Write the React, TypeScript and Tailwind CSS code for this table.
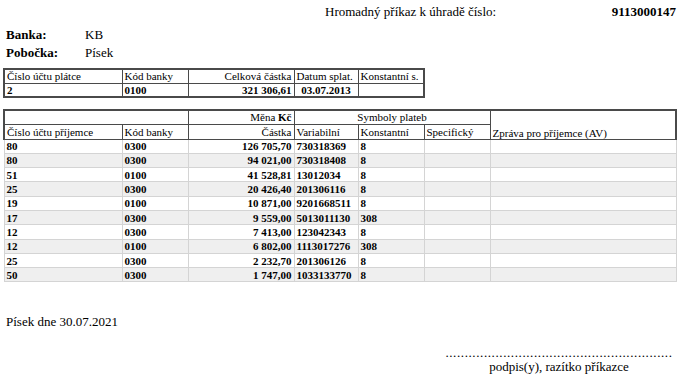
const rows = [
  { ucet: "80", kod: "0300", castka: "126 705,70", vs: "730318369", ks: "8" },
  { ucet: "80", kod: "0300", castka: "94 021,00", vs: "730318408", ks: "8" },
  { ucet: "51", kod: "0100", castka: "41 528,81", vs: "13012034", ks: "8" },
  { ucet: "25", kod: "0300", castka: "20 426,40", vs: "201306116", ks: "8" },
  { ucet: "19", kod: "0100", castka: "10 871,00", vs: "9201668511", ks: "8" },
  { ucet: "17", kod: "0300", castka: "9 559,00", vs: "5013011130", ks: "308" },
  { ucet: "12", kod: "0300", castka: "7 413,00", vs: "123042343", ks: "8" },
  { ucet: "12", kod: "0100", castka: "6 802,00", vs: "1113017276", ks: "308" },
  { ucet: "25", kod: "0300", castka: "2 232,70", vs: "201306126", ks: "8" },
  { ucet: "50", kod: "0300", castka: "1 747,00", vs: "1033133770", ks: "8" },
]

const cell = "py-0 px-[2px] leading-[12px]"
const hd = cell + " border border-[#4a4a4a] font-normal"
const hdb = cell + " border border-[#4a4a4a] font-bold"
const td = cell + " border border-[#d4d4d4] font-bold"

export default function App() {
  return (
    <div className="w-[680px] h-[379px] bg-white text-black [font-family:Liberation_Serif,Times_New_Roman,serif] overflow-hidden">
      {/* Header */}
      <div className="flex justify-between pl-[325px] pr-[4px] pt-[4px] text-[13px] leading-[16px]">
        <span>Hromadný příkaz k úhradě číslo:</span>
        <span className="font-bold">9113000147</span>
      </div>

      <div className="pl-[6px] pt-[6px] text-[13px] leading-[18px]">
        <div className="flex">
          <span className="w-[79px] font-bold">Banka:</span>
          <span>KB</span>
        </div>
        <div className="flex">
          <span className="w-[79px] font-bold">Pobočka:</span>
          <span>Písek</span>
        </div>
      </div>

      {/* Payer table */}
      <table className="ml-[3px] mt-[6px] border-collapse table-fixed text-[11px] border-2 border-[#4a4a4a]">
        <colgroup>
          <col className="w-[118px]" />
          <col className="w-[66px]" />
          <col className="w-[106px]" />
          <col className="w-[64px]" />
          <col className="w-[66px]" />
        </colgroup>
        <tbody>
          <tr className="h-[14px]">
            <td className={hd + " text-left"}>Číslo účtu plátce</td>
            <td className={hd + " text-left"}>Kód banky</td>
            <td className={hd + " text-right"}>Celková částka</td>
            <td className={hd + " text-left"}>Datum splat.</td>
            <td className={hd + " text-left"}>Konstantní s.</td>
          </tr>
          <tr className="h-[14px]">
            <td className={hdb}>2</td>
            <td className={hdb}>0100</td>
            <td className={hdb + " text-right"}>321 306,61</td>
            <td className={hdb + " text-center"}>03.07.2013</td>
            <td className={hdb}></td>
          </tr>
        </tbody>
      </table>

      {/* Payments table */}
      <table className="ml-[3px] mt-[11px] border-collapse table-fixed text-[11px]">
        <colgroup>
          <col className="w-[118px]" />
          <col className="w-[66px]" />
          <col className="w-[106px]" />
          <col className="w-[64px]" />
          <col className="w-[66px]" />
          <col className="w-[66px]" />
          <col className="w-[186px]" />
        </colgroup>
        <thead>
          <tr className="h-[14px]">
            <th colSpan={2} className={hd + " border-t-2 border-l-2"}></th>
            <th className={hd + " border-t-2 text-right"}>
              Měna <span className="font-bold">Kč</span>
            </th>
            <th colSpan={3} className={hd + " border-t-2 text-center"}>Symboly plateb</th>
            <th rowSpan={2} className={hd + " border-t-2 border-r-2 text-left align-bottom"}>
              Zpráva pro příjemce (AV)
            </th>
          </tr>
          <tr className="h-[15px]">
            <th className={hd + " border-l-2 text-left"}>Číslo účtu příjemce</th>
            <th className={hd + " text-left"}>Kód banky</th>
            <th className={hd + " text-right"}>Částka</th>
            <th className={hd + " text-left"}>Variabilní</th>
            <th className={hd + " text-left"}>Konstantní</th>
            <th className={hd + " text-left"}>Specifický</th>
          </tr>
        </thead>
        <tbody>
          {rows.map((r, i) => (
            <tr key={i} className={i % 2 ? "h-[14.3px] bg-[#efefef]" : "h-[14.3px] bg-white"}>
              <td className={td}>{r.ucet}</td>
              <td className={td}>{r.kod}</td>
              <td className={td + " text-right"}>{r.castka}</td>
              <td className={td}>{r.vs}</td>
              <td className={td}>{r.ks}</td>
              <td className={td}></td>
              <td className={td}></td>
            </tr>
          ))}
        </tbody>
      </table>

      {/* Footer */}
      <div className="pl-[6px] pt-[32px] text-[13px] leading-[16px]">Písek dne 30.07.2021</div>

      <div className="ml-[443px] w-[232px] mt-[16px] flex flex-col items-center text-[13px]">
        <div className="whitespace-nowrap leading-[13px] tracking-[0.6px]">
          ...........................................................
        </div>
        <div className="leading-[16px]">podpis(y), razítko příkazce</div>
      </div>
    </div>
  )
}
